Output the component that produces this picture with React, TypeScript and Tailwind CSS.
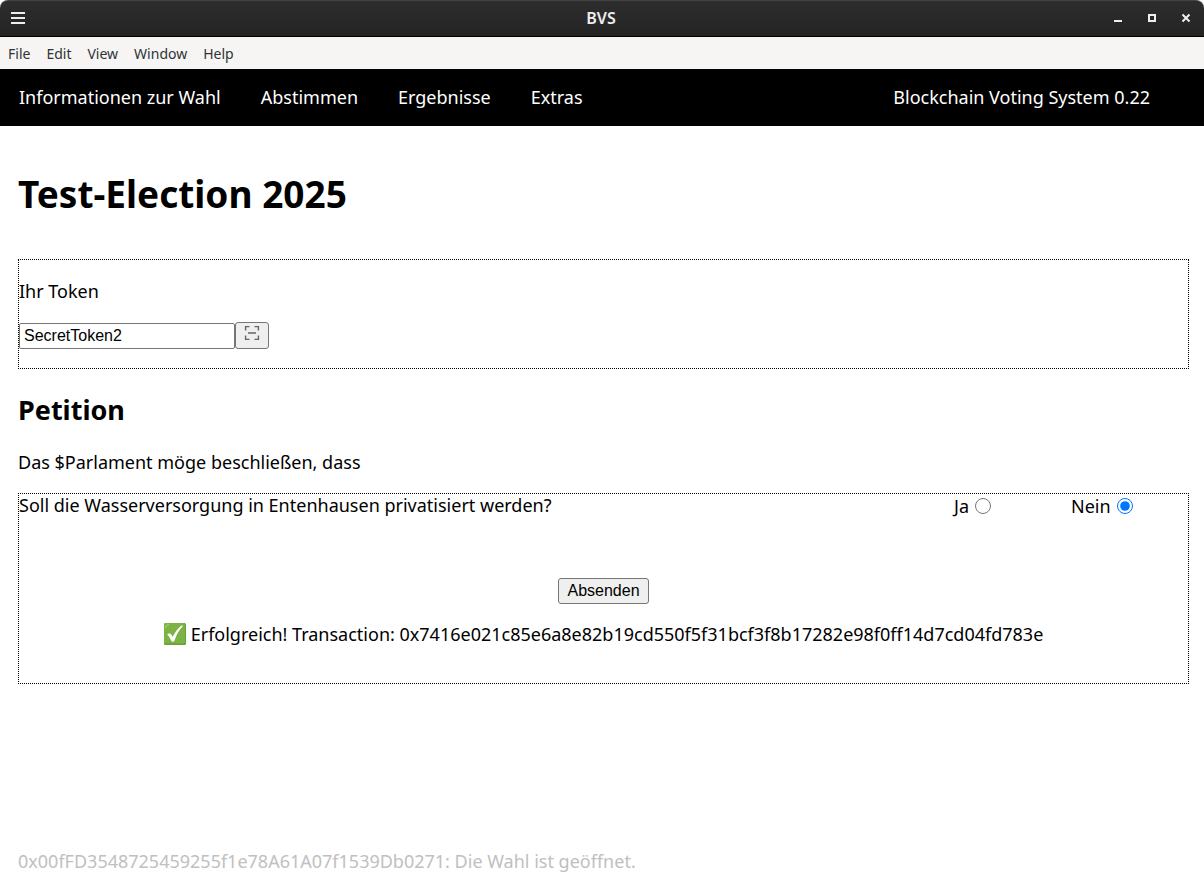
import { useState } from "react";

const menus = ["File", "Edit", "View", "Window", "Help"];
const links = ["Informationen zur Wahl", "Abstimmen", "Ergebnisse", "Extras"];

function TitleBar() {
  return (
    <header className="flex h-[37px] items-center justify-between rounded-t-lg border-t border-b border-t-[#434343] border-b-black bg-linear-to-b from-[#2d2d2d] to-[#242424] pr-[13px] pb-[2px] pl-[11px] text-[#eeeeec]">
      <button type="button" aria-label="Menü" className="w-[90px]">
        <svg width="14" height="14" viewBox="0 0 14 14" fill="currentColor" shapeRendering="crispEdges">
          <path d="M0 1h14v2H0zM0 6h14v2H0zM0 11h14v2H0z" />
        </svg>
      </button>
      <span className="text-base leading-5 font-semibold">BVS</span>
      <div className="flex w-[90px] justify-end gap-6">
        <button type="button" aria-label="Minimieren">
          <svg width="10" height="10" viewBox="0 0 10 10" fill="currentColor" shapeRendering="crispEdges">
            <path d="M1 7h8v2H1z" />
          </svg>
        </button>
        <button type="button" aria-label="Maximieren">
          <svg width="10" height="10" viewBox="0 0 10 10" fill="none" stroke="currentColor" strokeWidth="2" shapeRendering="crispEdges">
            <path d="M2 2h6v6H2z" />
          </svg>
        </button>
        <button type="button" aria-label="Schließen">
          <svg width="10" height="10" viewBox="0 0 10 10" fill="none" stroke="currentColor" strokeWidth="2">
            <path d="M1.5 1.5l7 7M8.5 1.5l-7 7" />
          </svg>
        </button>
      </div>
    </header>
  );
}

function ScanIcon() {
  return (
    <svg width="16" height="16" viewBox="0 0 16 16" fill="none" stroke="#666" strokeWidth="1.4">
      <path d="M1.6 5.500V1.600H5.500M10.500 1.600h3.900V5.500M14.400 10.500v3.900H10.500M5.500 14.400H1.600V10.500M4 8h8" />
    </svg>
  );
}

function CheckMark() {
  return (
    <svg width="22" height="22" viewBox="0 0 22 22" aria-hidden="true" className="shrink-0">
      <rect width="22" height="22" rx="1.5" fill="#689f38" />
      <rect width="21" height="20.5" rx="1.5" fill="#7cb342" />
      <path d="M1.5 5Q1.5 1.5 5 1.5" fill="none" stroke="#aed581" strokeWidth="1" />
      <path d="M3.2 11.4q1.5-1.5 2.8-.8 1.500.9 2.700 3.200Q12.500 6.200 17.300 2.700q1-.4 1.700.3Q13.300 8.900 10.500 17.500q-.6 1.500-2 1.200-1-.2-1.500-1.500Q5.700 13.700 3.200 11.400z" fill="#fff" />
    </svg>
  );
}

export default function App() {
  const [token, setToken] = useState("SecretToken2");
  const [vote, setVote] = useState("Nein");

  return (
    <div className="flex min-h-screen flex-col bg-white font-['Noto_Sans',sans-serif] text-lg leading-6 text-black">
      <TitleBar />
      <div role="menubar" className="flex h-8 items-center gap-4 bg-[#f6f5f4] px-2 pt-[2px] text-sm text-[#2e3436]">
        {menus.map((m) => (
          <button key={m} type="button" role="menuitem">{m}</button>
        ))}
      </div>
      <nav className="flex h-[57px] items-center justify-between bg-black pr-[54px] pb-[2px] pl-[19px] text-white">
        <div className="flex gap-10">
          {links.map((l) => (
            <a key={l} href="#">{l}</a>
          ))}
        </div>
        <span>Blockchain Voting System 0.22</span>
      </nav>

      <main className="flex grow flex-col pr-[15px] pl-[18px]">
        <h1 className="mt-11 text-[37px] leading-12 font-bold">Test-Election 2025</h1>
        <section className="mt-[41px] border border-dotted border-black py-[19px]">
          <label htmlFor="token" className="block">Ihr Token</label>
          <div className="mt-[19px] flex items-end">
            <input
              id="token"
              value={token}
              onChange={(e) => setToken(e.target.value)}
              className="h-[26px] w-[216px] rounded-[2px] border border-[#767676] px-1 font-['Liberation_Sans',sans-serif] text-base leading-5"
            />
            <button type="button" aria-label="Token scannen" className="flex h-[27px] w-[34px] justify-center rounded-[3px] border border-[#767676] bg-[#efefef] pt-[2px]">
              <ScanIcon />
            </button>
          </div>
        </section>

        <h2 className="mt-[23px] text-[27px] leading-9 font-bold">Petition</h2>
        <p className="mt-[22px]">Das $Parlament möge beschließen, dass</p>
        <section className="mt-[19px] border border-dotted border-black pb-[37px]">
          <fieldset className="flex items-start">
            <legend className="float-left grow leading-[22px]">Soll die Wasserversorgung in Entenhausen privatisiert werden?</legend>
            <div className="ml-auto flex w-[234px]">
              {["Ja", "Nein"].map((v) => (
                <label key={v} className="flex w-[117px] items-center gap-[6px]">
                  {v}
                  <input type="radio" name="vote" className="size-4" checked={vote === v} onChange={() => setVote(v)} />
                </label>
              ))}
            </div>
          </fieldset>
          <div className="mt-[60px] flex flex-col items-center gap-[18px]">
            <button type="button" className="h-[26px] rounded-[3px] border border-[#767676] bg-[#efefef] px-2 font-['Liberation_Sans',sans-serif] text-base leading-5">
              Absenden
            </button>
            <p className="flex items-center gap-[5px]">
              <CheckMark />
              Erfolgreich! Transaction: 0x7416e021c85e6a8e82b19cd550f5f31bcf3f8b17282e98f0ff14d7cd04fd783e
            </p>
          </div>
        </section>
        <footer className="mt-auto pb-[7px] text-[#c0c0c0]">
          0x00fFD3548725459255f1e78A61A07f1539Db0271: Die Wahl ist geöffnet.
        </footer>
      </main>
    </div>
  );
}
